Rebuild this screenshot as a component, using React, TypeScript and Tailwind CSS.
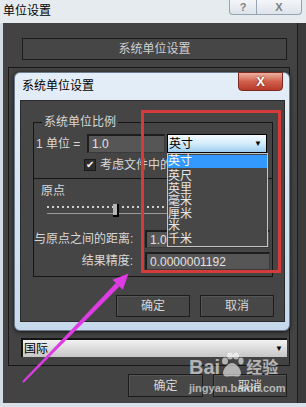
import React from "react"

const units = ["英尺", "英里", "毫米", "厘米", "米", "千米"]

const Btn = ({ label, w, h }: { label: string; w: string; h: string }) => (
  <div className={`${w} ${h} flex items-center justify-center border border-[#1c1c1c] bg-[#474747] shadow-[inset_1px_1px_0_#555] text-[#d6d6d6]`}>
    {label}
  </div>
)

const Input = ({ value, w }: { value: string; w: string }) => (
  <div className={`${w} h-full flex items-center pl-[3px] bg-[#565656] border-t-2 border-l-2 border-[#1e1e1e] border-b border-r border-b-[#3a3a3a] border-r-[#3a3a3a] text-[#e2e2e2]`}>
    {value}
  </div>
)

const Paw = () => (
  <svg width="24" height="26" viewBox="0 0 24 26">
    <g fill="#ffffff">
      <ellipse cx="5" cy="9" rx="3" ry="3.6" />
      <ellipse cx="10" cy="4" rx="3" ry="3.6" />
      <ellipse cx="16" cy="4" rx="3" ry="3.6" />
      <ellipse cx="21" cy="9" rx="2.6" ry="3.4" />
      <path d="M12 11c-4 0-9 6-9 10 0 3 3 4 5 3.5 2-.5 6-.5 8 0 2 .5 5-.5 5-3.5 0-4-5-10-9-10z" />
    </g>
  </svg>
)

const App = () => {
  return (
    <div className="relative w-[306px] h-[407px] overflow-hidden flex flex-col bg-[#e6ebf0] text-[12px] font-['Liberation_Sans','Noto_Sans_CJK_SC',sans-serif]">
      {/* outer title bar */}
      <div className="h-[23px] shrink-0 flex">
        <span className="pl-[3px] pt-[3px] leading-[16px] text-[12px] text-black">单位设置</span>
        <div className="ml-auto mr-[4px] flex h-[15px]">
          <div className="w-[28px] flex items-center justify-center border border-t-0 border-[#97a3af] rounded-bl-[4px] bg-gradient-to-b from-[#f4f6f9] to-[#dde3ea] text-[#808080] text-[11px] font-bold leading-none">?</div>
          <div className="w-[45px] flex items-center justify-center border border-t-0 border-l-0 border-[#97a3af] rounded-br-[4px] bg-gradient-to-b from-[#f4f6f9] to-[#dde3ea] text-[#808080] text-[11px] font-bold leading-none">X</div>
        </div>
      </div>

      {/* outer body */}
      <div className="flex-1 min-h-0 flex">
        <div className="w-[3px] bg-[#d3dce5]" />
        <div className="w-[295px] flex flex-col bg-[#434343] border-r border-[#1e1e1e]">
          <div className="mt-[15px] ml-[19px] w-[265px] h-[22px] flex items-center justify-center border border-[#1c1c1c] bg-[#464646] text-[#cfcfcf]">
            系统单位设置
          </div>
          <div className="mt-[7px] ml-[5px] w-[282px] h-[299px] flex flex-col justify-end pb-[8px] pl-[12px] border border-[#181818]">
            <div className="w-[266px] h-[19px] flex items-center justify-between bg-gradient-to-b from-[#f2f2f2] to-[#c6c6c6] border-t-2 border-l-2 border-[#151515]">
              <span className="pl-[1px] text-black leading-none">国际</span>
              <span className="pr-[4px] text-[8px] text-black leading-none">▼</span>
            </div>
          </div>
          <div className="mt-[8px] ml-[125px] flex gap-[10px]">
            <Btn label="确定" w="w-[75px]" h="h-[23px]" />
            <Btn label="取消" w="w-[74px]" h="h-[23px]" />
          </div>
        </div>
        <div className="flex-1 bg-[#3b3b3b]" />
      </div>
      <div className="h-[4px] shrink-0 bg-[#d9e0e7]" />

      {/* inner dialog */}
      <div className="absolute left-[14px] top-[72px] w-[276px] h-[259px] flex flex-col rounded-[6px] border border-[#6c7c8c] bg-gradient-to-b from-[#e4eef8] to-[#c6d9ea] shadow-[0_1px_4px_rgba(0,0,0,0.7)]">
        <div className="h-[27px] shrink-0 pl-[7px] leading-[27px] text-black">系统单位设置</div>
        <div className="absolute right-[6px] top-[-1px] w-[45px] h-[19px] flex items-center justify-center rounded-b-[4px] border border-[#7b2a1f] bg-gradient-to-b from-[#eab0a2] via-[#d0604c] to-[#b8392a] text-white text-[13px] font-bold leading-none [text-shadow:0_0_2px_#5a1a10]">
          X
        </div>
        <div className="ml-[5px] w-[265px] h-[222px] flex flex-col bg-[#454545] border border-[#2a2a2a] text-[#d8d8d8]">
          {/* group: 系统单位比例 */}
          <div className="relative mt-[21px] ml-[12px] w-[240px] h-[155px] flex flex-col border border-[#161616]">
            <span className="absolute left-[8px] top-[-8px] px-[2px] bg-[#454545] leading-[14px]">系统单位比例</span>
            <div className="mt-[11px] h-[19px] flex items-center">
              <span className="w-[53px] pl-[2px] whitespace-nowrap">1 单位 =</span>
              <Input value="1.0" w="w-[78px]" />
              <div className="relative ml-[2px] w-[100px] h-full">
                <div className="h-full flex items-center justify-between border border-black bg-gradient-to-b from-[#f4fbff] via-[#d4ecfb] to-[#9fcdef] text-black">
                  <span className="pl-[1px] leading-none">英寸</span>
                  <span className="pr-[4px] text-[8px] leading-none">▼</span>
                </div>
                <div className="absolute left-0 top-full z-10 w-[101px] h-[94px] pt-[1px] bg-[#474747] border border-[#c4c4c4] text-[#e6e6e6]">
                  <div className="h-[13px] leading-[13px] bg-[#3399ff] text-white">英寸</div>
                  <div className="mt-[2px]">
                    {units.map((u) => (
                      <div key={u} className="leading-[12.5px]">{u}</div>
                    ))}
                  </div>
                </div>
              </div>
            </div>
            <div className="mt-[6px] h-[12px] flex items-center pl-[50px]">
              <div className="w-[12px] h-[12px] flex items-center justify-center bg-[#2e2e2e] border border-[#1a1a1a] text-white text-[10px] leading-none">✔</div>
              <span className="ml-[4px] whitespace-nowrap">考虑文件中的系统单位</span>
            </div>
            {/* 原点 */}
            <div className="mt-[7px] border-t border-[#161616]" />
            <span className="mt-[5px] pl-[7px] leading-[14px]">原点</span>
            <div className="relative mt-[2px] ml-[13px] w-[210px] h-[18px]">
              <div className="mt-[6px] h-[2px] bg-[repeating-linear-gradient(90deg,#cfcfcf_0_2px,transparent_2px_5px)]" />
              <div className="mt-[5px] h-[1px] bg-[#9a9a9a]" />
              <div className="absolute left-[66px] top-[4px] w-[6px] h-[13px] bg-[#b4b4b4] border-r-2 border-b-2 border-black" />
            </div>
            <div className="mt-[12px] h-[18px] flex items-center">
              <span className="w-[99px] text-right whitespace-nowrap">与原点之间的距离:</span>
              <div className="ml-[12px] h-full"><Input value="1.0" w="w-[125px]" /></div>
            </div>
            <div className="mt-[4px] h-[18px] flex items-center">
              <span className="w-[99px] text-right whitespace-nowrap">结果精度:</span>
              <div className="ml-[12px] h-full"><Input value="0.0000001192" w="w-[125px]" /></div>
            </div>
          </div>
          <div className="mt-[18px] ml-[95px] flex gap-[10px]">
            <Btn label="确定" w="w-[74px]" h="h-[22px]" />
            <Btn label="取消" w="w-[74px]" h="h-[22px]" />
          </div>
        </div>
      </div>

      {/* red highlight */}
      <div className="absolute left-[141px] top-[110px] w-[140px] h-[163px] border-[3px] border-[#d53b3b] z-20" />

      {/* magenta arrow */}
      <svg className="absolute left-0 top-0 z-20 pointer-events-none" width="306" height="407" viewBox="0 0 306 407">
        <polygon points="22.3,381.3 115.8,283.1 119.4,286.5 23.7,382.7" fill="#dc3ce2" />
        <polygon points="128.5,273.5 112.4,279.8 122.8,289.8" fill="#dc3ce2" />
      </svg>

      {/* watermark */}
      <div className="absolute left-[189px] top-[352px] z-20 flex flex-col items-start opacity-60 text-white">
        <div className="flex items-end">
          <span className="text-[20px] font-bold leading-[22px]">Bai</span>
          <Paw />
          <span className="ml-[2px] text-[16px] font-bold leading-[20px]">经验</span>
        </div>
        <span className="mt-[4px] text-[11px] leading-[13px] font-bold">jingyan.baidu.com</span>
      </div>
    </div>
  )
}

export default App
